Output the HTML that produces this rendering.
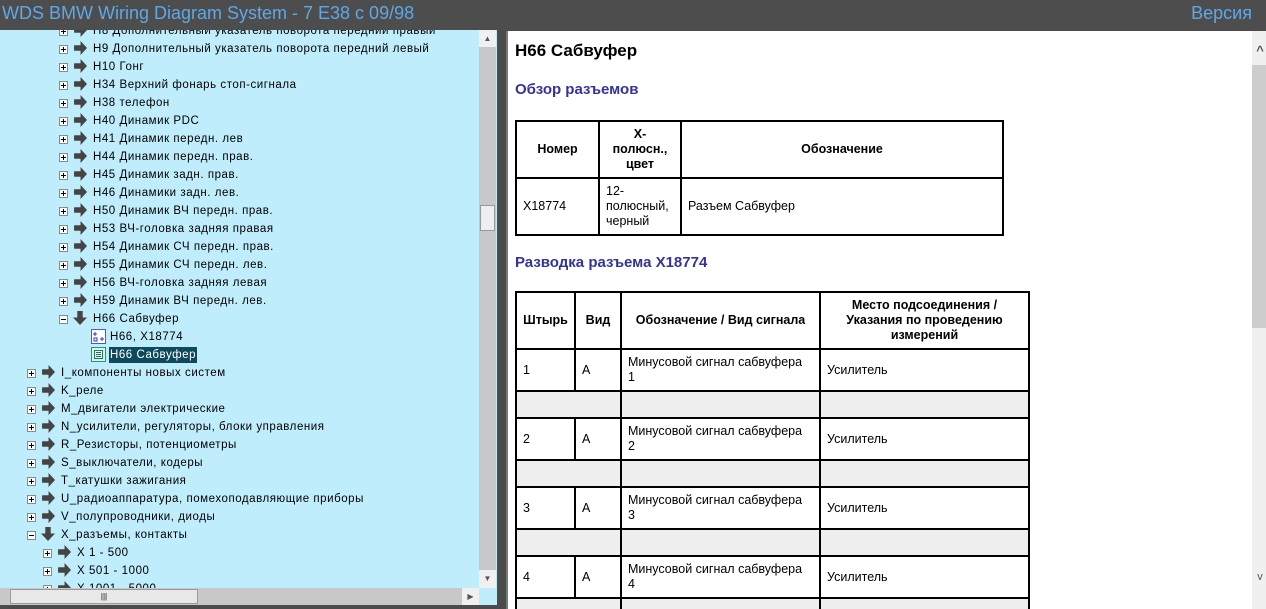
<!DOCTYPE html>
<html style="overflow:hidden;width:1266px;height:609px"><head><meta charset="utf-8"><style>
*{margin:0;padding:0;box-sizing:border-box}
body{width:1266px;height:609px;background:#4b4b4b;position:relative;overflow:hidden;font-family:"Liberation Sans",sans-serif}
.hdr{position:absolute;left:0;top:0;width:1266px;height:30px;background:#4d4d4d;color:#5ea8e8;font-size:18px}
.hdr .t{position:absolute;left:2px;top:3px}
.hdr .v{position:absolute;right:14px;top:3px}
.left{position:absolute;left:0;top:30px;width:497px;height:575px;background:#bfedfc;overflow:hidden}
.row{position:absolute;height:18px;font-size:11.5px;color:#000;white-space:nowrap;line-height:18px;letter-spacing:0.55px}
.pb{position:absolute;width:9px;height:9px;border:1px solid #8a8a8a;background:#fff;top:5px}
.pb:before{content:"";position:absolute;left:1px;top:3px;width:5px;height:1px;background:#000}
.pb.p:after{content:"";position:absolute;left:3px;top:1px;width:1px;height:5px;background:#000}
.ar{position:absolute;top:1px}
.vs{position:absolute;left:479px;top:0;width:17px;height:558px;background:#c8c8c8}
.hs{position:absolute;left:0;top:558px;width:479px;height:17px;background:#c8c8c8}
.right{position:absolute;left:506px;top:31px;width:760px;height:578px;background:#fff;border-left:2px solid #777;overflow:hidden}
.rs{position:absolute;left:744px;top:0;width:16px;height:578px;background:#f0f0f0}
h1{position:absolute;left:7px;top:10px;font-size:17px;font-weight:bold;color:#000}
h2{position:absolute;left:7px;font-size:15px;font-weight:bold;color:#333399}
table{position:absolute;border-collapse:collapse;font-size:12.5px}
td,th{border:2px solid #000;padding:0 6px;vertical-align:middle;line-height:15px}
th{font-weight:bold;text-align:center}
tr.g td{background:#eee;height:27px}
</style></head><body>
<div class="hdr"><span class="t">WDS BMW Wiring Diagram System - 7 E38 c 09/98</span><span class="v">Версия</span></div>
<div class="left">
<svg width="0" height="0" style="position:absolute"><defs>
<symbol id="a" viewBox="0 0 13 13"><path d="M1 4h6V0l6 6.5L7 13V9H1z" fill="#444"/></symbol>
<symbol id="d" viewBox="0 0 13 13"><path d="M4 0h5v6h4l-6.5 7L0 6h4z" fill="#444"/></symbol>
</defs></svg>
<div id="tree"></div>
<div class="vs"><div style="position:absolute;left:0;top:0;width:17px;height:17px;background:#f0f0f0;font-size:8px;color:#555;text-align:center;line-height:17px">▲</div><div style="position:absolute;left:1px;top:175px;width:15px;height:26px;background:#eee;border:1px solid #999"></div><div style="position:absolute;left:0;top:540px;width:17px;height:18px;background:#f0f0f0;font-size:8px;color:#555;text-align:center;line-height:18px">▼</div></div>
<div class="hs"><div style="position:absolute;left:10px;top:1px;width:188px;height:15px;background:#e8e8e8;border:1px solid #999;font-size:8px;text-align:center;line-height:13px">|||</div><div style="position:absolute;left:462px;top:0;width:17px;height:17px;background:#f0f0f0;font-size:8px;color:#555;text-align:center;line-height:17px">▶</div></div>
</div>
<div class="right">
<h1>H66 Сабвуфер</h1>
<h2 style="top:50px">Обзор разъемов</h2>
<table style="left:7px;top:89px;width:489px">
<tr style="height:57px"><th style="width:83px">Номер</th><th style="width:82px">X-<br>полюсн.,<br>цвет</th><th>Обозначение</th></tr>
<tr style="height:57px"><td>X18774</td><td>12-<br>полюсный,<br>черный</td><td>Разъем Сабвуфер</td></tr>
</table>
<h2 style="top:223px">Разводка разъема X18774</h2>
<table style="left:7px;top:260px;width:515px">
<tr style="height:57px"><th style="width:59px">Штырь</th><th style="width:46px">Вид</th><th style="width:199px">Обозначение / Вид сигнала</th><th>Место подсоединения /<br>Указания по проведению<br>измерений</th></tr>
<tr style="height:42px"><td>1</td><td>A</td><td>Минусовой сигнал сабвуфера<br>1</td><td>Усилитель</td></tr>
<tr class="g"><td colspan="2"></td><td></td><td></td></tr>
<tr style="height:42px"><td>2</td><td>A</td><td>Минусовой сигнал сабвуфера<br>2</td><td>Усилитель</td></tr>
<tr class="g"><td colspan="2"></td><td></td><td></td></tr>
<tr style="height:42px"><td>3</td><td>A</td><td>Минусовой сигнал сабвуфера<br>3</td><td>Усилитель</td></tr>
<tr class="g"><td colspan="2"></td><td></td><td></td></tr>
<tr style="height:42px"><td>4</td><td>A</td><td>Минусовой сигнал сабвуфера<br>4</td><td>Усилитель</td></tr>
<tr class="g"><td colspan="2"></td><td></td><td></td></tr>
</table>
<div class="rs"><div style="position:absolute;left:0;top:12px;width:16px;font-size:13px;color:#555;text-align:center;font-weight:bold">^</div><div style="position:absolute;left:0;top:34px;width:16px;height:263px;background:#cdcdcd"></div><div style="position:absolute;left:0;top:540px;width:16px;font-size:11px;color:#555;text-align:center">v</div></div>
</div>
<script>
var rows=[
[2,"p","a","H8 Дополнительный указатель поворота передний правый"],
[2,"p","a","H9 Дополнительный указатель поворота передний левый"],
[2,"p","a","H10 Гонг"],
[2,"p","a","H34 Верхний фонарь стоп-сигнала"],
[2,"p","a","H38 телефон"],
[2,"p","a","H40 Динамик PDC"],
[2,"p","a","H41 Динамик передн. лев"],
[2,"p","a","H44 Динамик передн. прав."],
[2,"p","a","H45 Динамик задн. прав."],
[2,"p","a","H46 Динамики задн. лев."],
[2,"p","a","H50 Динамик ВЧ передн. прав."],
[2,"p","a","H53 ВЧ-головка задняя правая"],
[2,"p","a","H54 Динамик СЧ передн. прав."],
[2,"p","a","H55 Динамик СЧ передн. лев."],
[2,"p","a","H56 ВЧ-головка задняя левая"],
[2,"p","a","H59 Динамик ВЧ передн. лев."],
[2,"m","d","H66 Сабвуфер"],
[3,"","i1","H66, X18774"],
[3,"","i2","H66 Сабвуфер"],
[1,"p","a","I_компоненты новых систем"],
[1,"p","a","K_реле"],
[1,"p","a","M_двигатели электрические"],
[1,"p","a","N_усилители, регуляторы, блоки управления"],
[1,"p","a","R_Резисторы, потенциометры"],
[1,"p","a","S_выключатели, кодеры"],
[1,"p","a","T_катушки зажигания"],
[1,"p","a","U_радиоаппаратура, помехоподавляющие приборы"],
[1,"p","a","V_полупроводники, диоды"],
[1,"m","d","X_разъемы, контакты"],
[1.5,"p","a","X 1 - 500"],
[1.5,"p","a","X 501 - 1000"],
[1.5,"p","a","X 1001 - 5000"]];
var h="";
rows.forEach(function(r,i){
 var y=i*18-8, lv=r[0], bx=lv==1?27:lv==1.5?43:lv==2?59:0;
 var s='<div class="row" style="left:0;top:'+y+'px;width:479px">';
 if(lv==3){
  if(r[2]=="i1") s+='<svg style="position:absolute;left:91px;top:1px" width="15" height="15"><rect x=".5" y=".5" width="14" height="14" fill="#fff" stroke="#55c"/><path d="M4 3v4M2 5h4M3 9h3v3H3zM9 10h4M11 8v4" stroke="#33c" fill="none"/></svg><span style="position:absolute;left:110px">'+r[3]+'</span>';
  else s+='<svg style="position:absolute;left:91px;top:1px" width="15" height="15"><rect x=".5" y=".5" width="14" height="14" fill="#cfe" stroke="#297"/><rect x="3.5" y="3.5" width="8" height="8" fill="#fff" stroke="#275"/><path d="M5 5.5h5M5 7.5h5M5 9.5h5" stroke="#275"/></svg><span style="position:absolute;left:109px;top:1px;height:16px;line-height:16px;background:#0e4a5e;color:#fff;padding:0 1px">'+r[3]+'</span>';
 } else {
  s+='<div class="pb '+r[1]+'" style="left:'+bx+'px"></div>';
  s+='<svg class="ar" style="left:'+(bx+14)+'px" width="14" height="14"><use href="#'+r[2]+'"/></svg>';
  s+='<span style="position:absolute;left:'+(bx+34)+'px">'+r[3]+'</span>';
 }
 h+=s+'</div>';
});
document.getElementById("tree").innerHTML=h;
</script>
</body></html>
